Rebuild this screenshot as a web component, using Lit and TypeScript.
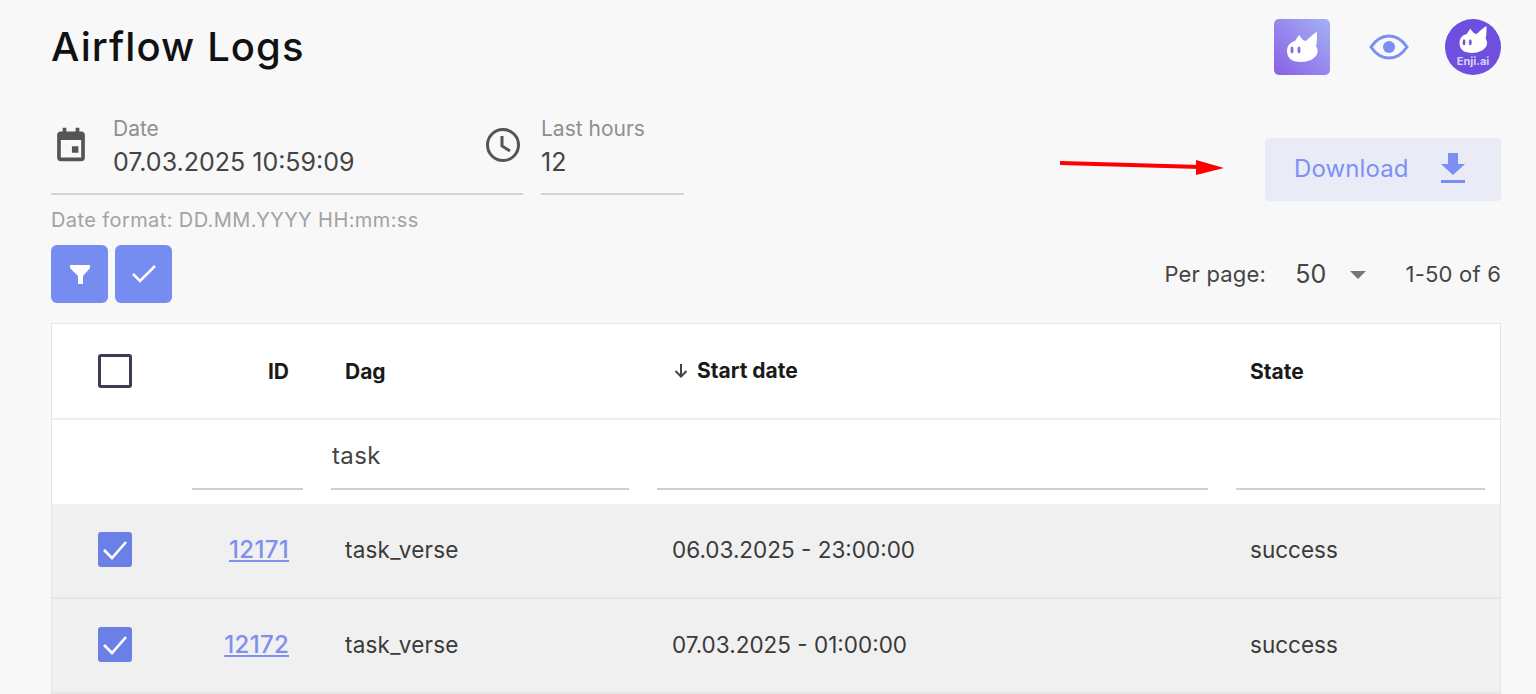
import { LitElement, html, css, svg } from "lit";
import { customElement } from "lit/decorators.js";

const cat = (fill: string, eye: string) => svg`
  <path d="M1 19 C1 13 5 10 9 9 L13 3 L17 8 L20 9 C23 6 27 2 31 0 C31 6 31 11 30 14 C32 17 32 20 31 22 C29 27 22 30 15 30 C7 30 1 27 1 19 Z" fill="${fill}"/>
  <ellipse cx="6" cy="18" rx="1.500" ry="3.400" fill="${eye}"/>
  <ellipse cx="13" cy="18" rx="1.500" ry="3.400" fill="${eye}"/>`;

const rows = [
  { id: "12171", start: "06.03.2025 - 23:00:00" },
  { id: "12172", start: "07.03.2025 - 01:00:00" },
];

@customElement("app-root")
export class AppRoot extends LitElement {
  static styles = css`
    :host {
      display: block;
      height: 694px;
      overflow: hidden;
      background: #f8f8f8;
      font-family: Inter, "Liberation Sans", sans-serif;
      color: #333;
      box-sizing: border-box;
      padding: 19px 35px 0 51px;
    }
    svg { display: block; flex: none; }
    .head { display: flex; justify-content: space-between; align-items: center; height: 56px; }
    h1 { margin: 0; font-size: 40px; font-weight: 500; color: #111; line-height: 56px; letter-spacing: 1.1px; }
    .head-icons { display: flex; align-items: center; }
    .app-logo {
      width: 56px; height: 56px; border-radius: 5px;
      background: linear-gradient(45deg, #8a5fe6, #a3b2f4);
      display: flex; align-items: center; justify-content: center;
    }
    .eye { margin: 0 36px 0 39px; }
    .brand {
      width: 56px; height: 56px; border-radius: 50%; background: #6f4fe0;
      display: flex; flex-direction: column; align-items: center; padding-top: 7px; box-sizing: border-box;
    }
    .brand span { font-size: 11px; font-weight: 700; color: #d9d3f7; line-height: 12px; margin-top: 2px; }
    .controls { display: flex; justify-content: space-between; margin-top: 43px; }
    .fields { display: flex; }
    .field-main { display: flex; border-bottom: 2px solid #d4d4d4; height: 77px; box-sizing: border-box; }
    .date { width: 472px; }
    .hours { width: 143px; margin-left: 18px; }
    .cal { margin: 8px 24px 0 2px; }
    .clock { margin: 9px 2px 0 auto; }
    .label { font-size: 21px; line-height: 22px; color: #8f8f8f; }
    .value { font-size: 25px; line-height: 30px; color: #444; margin-top: 7px; }
    .hint { font-size: 20px; line-height: 24px; color: #a2a2a2; margin-top: 13px; letter-spacing: .4px; }
    .download {
      width: 236px; height: 63px; margin-top: 20px; background: #e9ecf7; border-radius: 4px;
      color: #7e90f3; font-size: 24px; letter-spacing: .1px; display: flex; align-items: center; padding: 0 0 3px 29px; box-sizing: border-box;
    }
    .download svg { margin-left: 30px; }
    .arrow { position: absolute; left: 1060px; top: 155px; }
    .tools { display: flex; justify-content: space-between; align-items: center; height: 58px; margin-top: 13px; }
    .btns { display: flex; gap: 7px; }
    .btn { width: 57px; height: 58px; border-radius: 6px; background: #778cf1; display: flex; align-items: center; justify-content: center; }
    .pager { display: flex; align-items: center; font-size: 22px; letter-spacing: .2px; color: #444; margin-top: -1px; }
    .pager .num { font-size: 25px; margin-left: 29px; }
    .pager .caret { width: 0; height: 0; border: 8px solid transparent; border-top: 8px solid #777; border-bottom: 0; margin: 2px 40px 0 23px; }
    .table { margin-top: 20px; background: #fff; border: 1px solid #e6e6e6; border-bottom: 0; }
    .row { display: grid; grid-template-columns: 126px 139px 326px 579px 1fr; align-items: center; box-sizing: border-box; }
    .hrow { height: 96px; border-bottom: 2px solid #eeeeee; font-size: 21px; font-weight: 700; color: #1a1a1a; }
    .frow { height: 84px; align-items: stretch; }
    .drow { height: 95px; background: #f0f0f0; border-bottom: 2px solid #e6e6e6; font-size: 22.500px; color: #3a3a3a; padding-bottom: 2px; }
    .c-check { display: flex; justify-content: center; }
    .c-id { text-align: right; padding-right: 28px; }
    .c-text { padding-left: 28px; }
    .c-start { padding-left: 29px; }
    .dag { letter-spacing: .2px; }
    .sort { display: inline-flex; align-items: center; gap: 7px; }
    .box { width: 34px; height: 34px; border: 3px solid #3a3d55; border-radius: 3px; box-sizing: border-box; }
    .checked { width: 34px; height: 35px; background: #6b80e6; border-radius: 3px; display: flex; align-items: center; justify-content: center; }
    a { color: #7e8ff0; text-decoration: underline; font-size: 24px; font-weight: 500; letter-spacing: .3px; }
    .filter { display: flex; padding: 0 14px 14px; align-items: flex-end; }
    .filter div { flex: 1; height: 69px; border-bottom: 2px solid #d0d0d0; box-sizing: border-box; font-size: 24px; line-height: 70px; color: #444; letter-spacing: .4px; text-indent: 1px; }
    .filter.last { padding-right: 15px; }
  `;

  render() {
    return html`
      <div class="head">
        <h1>Airflow Logs</h1>
        <div class="head-icons">
          <div class="app-logo"><svg width="32" height="30" viewBox="0 0 32 30">${cat("#fff", "#8a6ce8")}</svg></div>
          <svg class="eye" width="40" height="28" viewBox="0 0 40 28" fill="none">
            <path d="M2 14 C8 5 14 3 20 3 C26 3 32 5 38 14 C32 23 26 25 20 25 C14 25 8 23 2 14 Z" stroke="#7b8ef3" stroke-width="3"/>
            <circle cx="20" cy="14" r="6" fill="#7b8ef3"/>
          </svg>
          <div class="brand">
            <svg width="30" height="27" viewBox="0 0 32 30">${cat("#fff", "#6f4fe0")}</svg>
            <span>Enji.ai</span>
          </div>
        </div>
      </div>

      <div class="controls">
        <div>
          <div class="fields">
            <div class="date field-main">
              <svg class="cal" width="36" height="37" viewBox="0 0 36 40"><path fill="#555" d="M9 2h4v4h10V2h4v4h2a4 4 0 0 1 4 4v24a4 4 0 0 1-4 4H7a4 4 0 0 1-4-4V10a4 4 0 0 1 4-4h2V2Zm-2 13v19h22V15H7Zm12 7h7v7h-7v-7Z" fill-rule="evenodd"/></svg>
              <div>
                <div class="label">Date</div>
                <div class="value">07.03.2025 10:59:09</div>
              </div>
              <svg class="clock" width="36" height="36" viewBox="0 0 36 36" fill="none" stroke="#555" stroke-width="3"><circle cx="18" cy="18" r="15.500"/><path d="M17 9v10l8 5"/></svg>
            </div>
            <div class="hours field-main">
              <div>
                <div class="label">Last hours</div>
                <div class="value">12</div>
              </div>
            </div>
          </div>
          <div class="hint">Date format: DD.MM.YYYY HH:mm:ss</div>
        </div>
        <div class="download">Download
          <svg width="28" height="32" viewBox="0 0 28 32"><path fill="#7b8ef3" d="M9 1h10v11h7L14 23 2 12h7V1Zm-7 27h24v3H2z"/></svg>
        </div>
      </div>
      <svg class="arrow" width="166" height="24" viewBox="0 0 166 24"><path d="M1 8 L140 12" stroke="#f00" stroke-width="4" stroke-linecap="round"/><path d="M136 5 L164 13 L136 20 Z" fill="#f00"/></svg>

      <div class="tools">
        <div class="btns">
          <div class="btn"><svg width="24" height="24" viewBox="0 0 24 24"><path fill="#fff" d="M2 3h20v3l-7 8v8l-5 0v-8L2 6z"/></svg></div>
          <div class="btn"><svg width="26" height="22" viewBox="0 0 26 22" fill="none"><path d="M2 11l7 7L24 3" stroke="#fff" stroke-width="2.500"/></svg></div>
        </div>
        <div class="pager">
          <span>Per page:</span><span class="num">50</span><span class="caret"></span><span>1-50 of 6</span>
        </div>
      </div>

      <div class="table">
        <div class="row hrow">
          <div class="c-check"><div class="box"></div></div>
          <div class="c-id">ID</div>
          <div class="c-text">Dag</div>
          <div class="c-start"><span class="sort"><svg width="18" height="18" viewBox="0 0 18 18" fill="none" stroke="#444" stroke-width="2"><path d="M9 3v12M3.500 10 9 15.500 14.500 10"/></svg>Start date</span></div>
          <div class="c-text">State</div>
        </div>
        <div class="row frow">
          <div></div>
          <div class="filter"><div></div></div>
          <div class="filter"><div>task</div></div>
          <div class="filter"><div></div></div>
          <div class="filter last"><div></div></div>
        </div>
        ${rows.map((r) => html`
          <div class="row drow">
            <div class="c-check"><div class="checked"><svg width="28" height="24" viewBox="0 0 28 24" fill="none"><path d="M3 12l8 8L25 4" stroke="#fff" stroke-width="2.600"/></svg></div></div>
            <div class="c-id"><a href="#">${r.id}</a></div>
            <div class="c-text dag">task_verse</div>
            <div class="c-start">${r.start}</div>
            <div class="c-text">success</div>
          </div>`)}
      </div>
    `;
  }
}
